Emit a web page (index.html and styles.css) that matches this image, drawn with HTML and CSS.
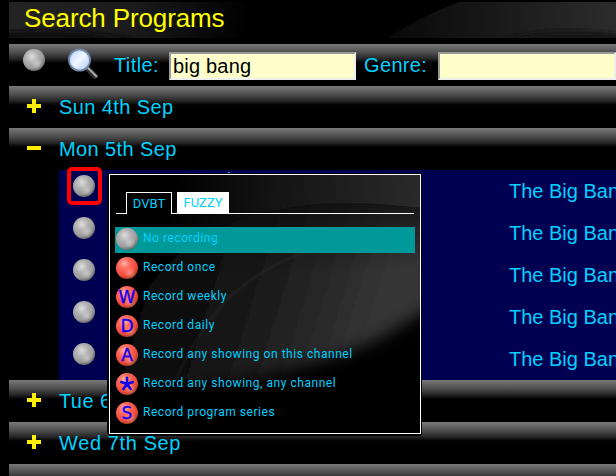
FILE: index.html
```html
<!DOCTYPE html>
<html lang="en">
<head>
<meta charset="utf-8">
<title>Search Programs</title>
<link rel="stylesheet" href="styles.css">
</head>
<body>
<svg class="defs" width="0" height="0" aria-hidden="true">
  <defs>
    <radialGradient id="gray" cx=".4" cy=".34" r=".68"><stop offset="0" stop-color="#dedede"/><stop offset=".4" stop-color="#b2b2b2"/><stop offset=".75" stop-color="#9c9c9c"/><stop offset="1" stop-color="#666"/></radialGradient>
    <radialGradient id="red" cx=".38" cy=".3" r=".72"><stop offset="0" stop-color="#ffb0a8"/><stop offset=".35" stop-color="#ff6a5c"/><stop offset=".75" stop-color="#f24a3c"/><stop offset="1" stop-color="#a83c20"/></radialGradient>
    <radialGradient id="shine"><stop offset="0" stop-color="#fff" stop-opacity=".35"/><stop offset="1" stop-color="#fff" stop-opacity="0"/></radialGradient>
    <linearGradient id="lens" x2="1" y2="1"><stop offset="0" stop-color="#bcd4fa"/><stop offset=".5" stop-color="#f2f7ff"/><stop offset="1" stop-color="#a9c6f2"/></linearGradient>
    <symbol id="ball-gray" viewBox="0 0 22 22"><circle cx="11" cy="11" r="11" fill="url(#gray)"/><circle cx="14" cy="15" r="6" fill="url(#shine)"/></symbol>
    <symbol id="ball-red" viewBox="0 0 22 22"><circle cx="11" cy="11" r="11" fill="url(#red)"/><circle cx="14" cy="16" r="6" fill="url(#shine)"/></symbol>
  </defs>
</svg>
<header class="title-bar">
  <svg class="swoosh" viewBox="0 0 607 36" preserveAspectRatio="none">
    <defs>
      <linearGradient id="h1" gradientUnits="userSpaceOnUse" x1="0" y1="0" x2="250" y2="30"><stop offset="0" stop-color="#242424"/><stop offset=".5" stop-color="#1a1a1a"/><stop offset=".95" stop-color="#000"/></linearGradient>
      <linearGradient id="h2" x2="1"><stop offset="0" stop-color="#080808"/><stop offset="1" stop-color="#2c2c2c"/></linearGradient>
      <filter id="hsoft" x="-10%" y="-50%" width="120%" height="200%"><feGaussianBlur stdDeviation="2"/></filter>
    </defs>
    <path d="M0 0H260V36H0Z" fill="url(#h1)"/>
    <path d="M-10 30Q70 25 130 38H-10Z" fill="#101010" filter="url(#hsoft)"/>
    <path d="M378 36Q410 15 450 0H607V36Z" fill="url(#h2)"/>
    <path d="M485 40Q540 22 617 33V40Z" fill="#151515" filter="url(#hsoft)"/>
  </svg>
  <h1>Search Programs</h1>
</header>
<main>
  <form class="bar search">
    <svg class="ball"><use href="#ball-gray"/></svg>
    <svg class="magnifier" viewBox="0 0 32 32">
      <path d="M20 20L29.5 29.5" stroke="#555" stroke-width="5"/>
      <path d="M21 20L30 29" stroke="#bbb" stroke-width="1.5"/>
      <path d="M20 22L28 30" stroke="#252525" stroke-width="1.4"/>
      <circle cx="12.5" cy="12" r="10.5" fill="url(#lens)" stroke="#7187a5" stroke-width="2"/>
      <circle cx="12.5" cy="12" r="9" fill="none" stroke="#c6dcff"/>
    </svg>
    <label for="title">Title:</label>
    <input id="title" class="title-input" type="text" value="big bang">
    <label class="genre" for="genre">Genre:</label>
    <input id="genre" class="genre-input" type="text">
  </form>
  <div class="bar day"><i class="toggle plus"></i><span>Sun 4th Sep</span></div>
  <div class="bar day"><i class="toggle"></i><span>Mon 5th Sep</span></div>
  <div class="programs">
    <div class="program"><span class="selected"><svg class="ball"><use href="#ball-gray"/></svg></span><span class="name">The Big Bang Theory</span></div>
    <div class="program"><svg class="ball"><use href="#ball-gray"/></svg><span class="name">The Big Bang Theory</span></div>
    <div class="program"><svg class="ball"><use href="#ball-gray"/></svg><span class="name">The Big Bang Theory</span></div>
    <div class="program"><svg class="ball"><use href="#ball-gray"/></svg><span class="name">The Big Bang Theory</span></div>
    <div class="program"><svg class="ball"><use href="#ball-gray"/></svg><span class="name">The Big Bang Theory</span></div>
    <i class="tick"></i>
  </div>
  <div class="bar day"><i class="toggle plus"></i><span>Tue 6th Sep</span></div>
  <div class="bar day"><i class="toggle plus"></i><span class="wed">Wed 7th Sep</span></div>
  <div class="bar last"></div>
</main>
<section class="popup">
  <svg class="swoosh" viewBox="0 0 311 259">
    <defs>
      <linearGradient id="p1" gradientUnits="userSpaceOnUse" x1="60" y1="30" x2="311" y2="40"><stop offset="0" stop-color="#000"/><stop offset=".4" stop-color="#131313"/><stop offset="1" stop-color="#2a2a2a"/></linearGradient>
      <linearGradient id="p2" gradientUnits="userSpaceOnUse" x1="40" y1="80" x2="270" y2="150"><stop offset="0" stop-color="#050505"/><stop offset=".4" stop-color="#161616"/><stop offset="1" stop-color="#363636"/></linearGradient>
      <linearGradient id="p3" gradientUnits="userSpaceOnUse" x1="200" y1="28" x2="205" y2="100"><stop offset="0" stop-color="#0c0c0c" stop-opacity=".8"/><stop offset="1" stop-color="#0c0c0c" stop-opacity="0"/></linearGradient>
      <filter id="soft" x="-20%" y="-20%" width="140%" height="140%"><feGaussianBlur stdDeviation="1.2"/></filter>
      <filter id="edge" x="-20%" y="-20%" width="140%" height="140%"><feGaussianBlur stdDeviation="8"/></filter>
    </defs>
    <path d="M0 0H311V100H0Z" fill="url(#p1)"/>
    <path d="M-4 190Q30 100 95 60Q160 27 240 28Q280 28 320 34V206H-4Z" fill="url(#p2)" filter="url(#soft)"/>
    <path d="M95 60Q160 27 240 28Q280 28 320 34V100H60Z" fill="url(#p3)"/>
    <path d="M66 206Q90 150 125 118Q165 84 215 72" stroke="#555" stroke-width="1.5" fill="none" opacity=".25" filter="url(#soft)"/>
    <path d="M90 213Q190 198 250 173Q300 151 350 111V300H90Z" fill="#000" filter="url(#edge)"/>
    <path d="M0 206H311V259H0Z" fill="#000"/>
  </svg>
  <div class="tabs"><span class="tab active">DVBT</span><span class="tab">FUZZY</span></div>
  <ul class="options">
    <li class="current"><svg class="ball"><use href="#ball-gray"/></svg><span>No recording</span></li>
    <li><svg class="ball"><use href="#ball-red"/></svg><span>Record once</span></li>
    <li><svg class="ball" viewBox="0 0 22 22"><use href="#ball-red"/><text x="11" y="17">W</text></svg><span>Record weekly</span></li>
    <li><svg class="ball" viewBox="0 0 22 22"><use href="#ball-red"/><text x="11" y="17">D</text></svg><span>Record daily</span></li>
    <li><svg class="ball" viewBox="0 0 22 22"><use href="#ball-red"/><text x="11" y="17">A</text></svg><span>Record any showing on this channel</span></li>
    <li><svg class="ball" viewBox="0 0 22 22"><use href="#ball-red"/><path class="star" d="M11 11V4.8M11 11L5.2 9M11 11L16.8 9M11 11L7.4 16M11 11L14.6 16"/></svg><span>Record any showing, any channel</span></li>
    <li><svg class="ball" viewBox="0 0 22 22"><use href="#ball-red"/><text x="11" y="17">S</text></svg><span>Record program series</span></li>
  </ul>
</section>
</body>
</html>
```
FILE: styles.css
```css
* { box-sizing: border-box; }
html, body { width: 616px; height: 476px; overflow: hidden; }
body {
  margin: 0;
  padding: 2px 0 0 9px;
  background: #000;
  color: #00d2ff;
  font: 20px/24px "Liberation Sans", Arial, sans-serif;
}
svg { display: block; flex: none; }
.defs { position: absolute; }
.title-bar { position: relative; height: 36px; margin-bottom: 6px; overflow: hidden; }
.swoosh { position: absolute; inset: 0; width: 100%; height: 100%; }
h1 {
  position: relative;
  margin: 0;
  padding-left: 15px;
  color: #ff0;
  font-size: 26px;
  font-weight: 400;
  line-height: 33px;
  letter-spacing: -.12px;
}
.bar {
  display: flex;
  height: 42px;
  background: linear-gradient(#7a7a7a 0, #505050 8px, #242424 15px, #000 19px);
  white-space: nowrap;
}
.last { height: 12px; }
.ball { width: 22px; height: 22px; }
.search { padding-left: 14px; align-items: flex-start; }
.search .ball { margin-top: 5px; }
.magnifier { width: 32px; height: 32px; margin: 4px 0 0 22px; }
.search label { margin: 9px 0 0 15px; width: 46px; letter-spacing: .4px; }
.search .genre { margin-left: 8px; width: 65px; letter-spacing: .35px; }
.search input {
  height: 28px;
  margin: 8px 0 0 9px;
  padding: 0 3px;
  border: 2px solid;
  border-color: #999 #eee #eee #999;
  border-radius: 0;
  background: #ffc;
  color: #000;
  font: inherit;
  letter-spacing: .2px;
}
.search .title-input { width: 187px; margin-left: 10px; padding-left: 2px; }
.search .genre-input { width: 200px; flex: none; }
.day { padding: 9px 0 0 18px; }
.day span { margin-left: 18px; letter-spacing: .4px; }
.day .wed { letter-spacing: .62px; }
.search .genre-input { width: 178px; flex: 1 0 auto; margin-left: 9px; }
.search .genre { flex: none; }
.toggle {
  width: 14px;
  height: 14px;
  margin-top: 4px;
  background: linear-gradient(#fe0, #fe0) 0 5px / 14px 4px no-repeat;
}
.plus {
  background: linear-gradient(#fe0, #fe0) 0 5px / 14px 4px no-repeat,
    linear-gradient(#fe0, #fe0) 5px 0 / 4px 14px no-repeat;
}
.programs { position: relative; margin-left: 50px; background: #000052; }
.program { display: grid; grid-template-columns: 450px 1fr; height: 42px; white-space: nowrap; overflow: hidden; }
.program:first-child { overflow: visible; }
.program > .ball { margin: 5px 0 0 14px; }
.name { padding-top: 9px; overflow: hidden; }
.selected {
  width: 35px;
  height: 38px;
  margin: -3px 0 0 8px;
  padding: 4px 0 0 2px;
  border: 4px solid #f00;
  border-radius: 5px;
}
.tick { position: absolute; left: 169px; top: 2px; width: 2px; height: 3px; background: #00b8e8; }
.popup {
  position: absolute;
  left: 109px;
  top: 174px;
  width: 312px;
  height: 260px;
  border: 1px solid #fff;
  outline: 1px solid #000;
  box-shadow: -2px -1px 0 #000, 0 2px 0 #000;
  background: #000;
  overflow: hidden;
  font-family: Roboto, sans-serif;
  font-size: 12px;
  font-weight: 400;
  letter-spacing: .54px;
}
.tabs { position: relative; display: flex; gap: 5px; height: 22px; margin: 17px 6px 0; }
.tabs::before { content: ""; width: 10px; margin-right: -5px; border-bottom: 1px solid #fff; }
.tabs::after { content: ""; flex: 1; margin-left: -5px; border-bottom: 1px solid #fff; }
.tab { position: relative; width: 52px; border-bottom: 1px solid #fff; background: #fff; text-align: center; line-height: 22px; font-size: 13px; letter-spacing: 0; }
.tab.active { width: 46px; border: 1px solid #fff; border-bottom: 0; background: #000; line-height: 21px; }
.tab.active::after { content: ""; position: absolute; left: 100%; bottom: 0; width: 6px; border-bottom: 1px solid #fff; }
.options { position: relative; margin: 13px 5px 0; padding: 0; list-style: none; }
.options li { display: flex; gap: 5px; height: 26px; margin-bottom: 3px; padding: 1px; line-height: 20px; white-space: nowrap; }
.options .current { background: #009999; }
.options text { fill: #1000f0; font: 17px "DejaVu Sans", sans-serif; letter-spacing: 0; text-anchor: middle; stroke: #1000f0; stroke-width: .4px; }
.star { fill: none; stroke: #1000f0; stroke-width: 2.6; stroke-linecap: round; }
```
